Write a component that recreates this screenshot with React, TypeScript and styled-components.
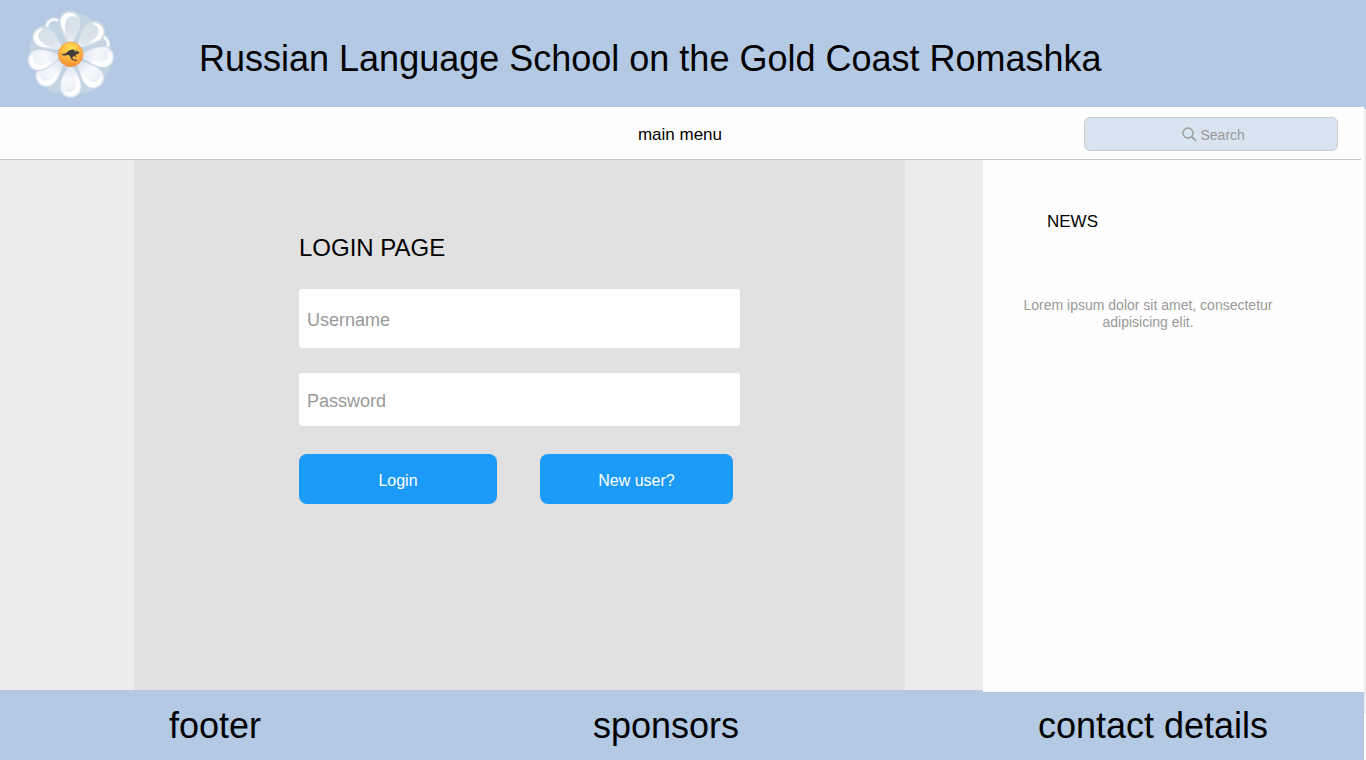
import React from "react";
import styled, { createGlobalStyle } from "styled-components";

const GlobalStyle = createGlobalStyle`
  * { box-sizing: border-box; }
  body {
    margin: 0;
    background: #ffffff;
    color: #000000;
    font-family: "Liberation Sans", Arial, Helvetica, sans-serif;
  }
`;

const blue = "#b3c9e4";
const columns = "134fr 771fr 78fr 381fr";

const Page = styled.div`
  display: flex;
  flex-direction: column;
  min-height: 100vh;
`;

const Header = styled.header`
  display: flex;
  align-items: center;
  height: 107px;
  padding-left: 15px;
  background: ${blue};
`;

const Logo = styled.svg`
  flex: none;
  width: 120px;
  height: 107px;
`;

const Title = styled.h1`
  margin: 10px 0 0 64px;
  font-size: 36px;
  font-weight: 400;
  line-height: 42px;
`;

const Middle = styled.div`
  display: flex;
  flex: 1;
  flex-direction: column;
  padding-right: 2px;
  background: linear-gradient(${blue} 2px, #ececec 2px);
`;

const NavBar = styled.div`
  display: grid;
  grid-template-columns: 1fr auto 1fr;
  align-items: center;
  height: 53px;
  background: linear-gradient(#cccccc, #cccccc) left bottom / calc(100% - 3px) 1px
    no-repeat #fefefe;
`;

const MenuLink = styled.a`
  grid-column: 2;
  padding: 2px 4px 0 0;
  color: #000000;
  font-size: 17px;
  line-height: 20px;
  text-decoration: none;
`;

const SearchBox = styled.label`
  display: flex;
  align-items: center;
  justify-content: center;
  justify-self: end;
  gap: 4px;
  width: 254px;
  height: 34px;
  margin-right: 26px;
  padding: 2px 0 0 6px;
  border: 1px solid #cccccc;
  border-radius: 6px;
  background: #d8e4f0;
`;

const SearchIcon = styled.svg`
  flex: none;
  width: 15px;
  height: 15px;
`;

const SearchInput = styled.input`
  width: 46px;
  padding: 0;
  border: 0;
  outline: 0;
  background: transparent;
  font: 14px/18px "Liberation Sans", Arial, sans-serif;
  &::placeholder { color: #999999; opacity: 1; }
`;

const Content = styled.div`
  display: grid;
  flex: 1;
  grid-template-columns: ${columns};
`;

const Main = styled.main`
  grid-column: 2;
  padding: 72px 165px 24px;
  background: #e1e1e1;
`;

const PageTitle = styled.h2`
  margin: 0 0 26px;
  font-size: 24px;
  font-weight: 400;
  line-height: 31px;
`;

const Form = styled.form`
  display: flex;
  flex-direction: column;
`;

const Field = styled.input<{ $height: number }>`
  width: 100%;
  height: ${(p) => p.$height}px;
  margin-bottom: 25px;
  padding: 4px 8px 0;
  border: 0;
  border-radius: 3px;
  background: #ffffff;
  font: 18px "Liberation Sans", Arial, sans-serif;
  &::placeholder { color: #999999; opacity: 1; }
`;

const Actions = styled.div`
  display: flex;
  gap: 43px;
  padding: 3px 7px 0 0;
`;

const Button = styled.button<{ $grow: number }>`
  flex: ${(p) => p.$grow} 1 0;
  height: 50px;
  padding: 4px 0 0;
  border: 0;
  border-radius: 8px;
  background: #1c9af8;
  color: #ffffff;
  font: 16px "Liberation Sans", Arial, sans-serif;
  cursor: pointer;
`;

const News = styled.aside`
  position: relative;
  grid-column: 4;
  margin-bottom: -2px;
  padding: 51px 38px 24px;
  background: #fefefe;
`;

const NewsTitle = styled.h2`
  margin: 0 0 64px 26px;
  font-size: 17px;
  font-weight: 400;
  line-height: 22px;
`;

const NewsText = styled.p`
  max-width: 254px;
  margin: 0;
  color: #999999;
  font-size: 14px;
  line-height: 17px;
  text-align: center;
`;

const Footer = styled.footer`
  padding-right: 2px;
  background: linear-gradient(#ececec 24px, #ffffff 24px);
`;

const FooterBar = styled.div`
  display: grid;
  grid-template-columns: 430fr 472fr 40fr 422fr;
  align-items: center;
  height: 70px;
  padding-top: 2px;
  background: ${blue};
  font-size: 36px;
  line-height: 42px;
  text-align: center;
`;

const FooterItem = styled.span<{ $column: number }>`
  grid-column: ${(p) => p.$column};
`;

const PETAL =
  "M0-20C-8-42-34-70-32-98C-31-120-16-130 0-130C16-130 31-120 32-98C34-70 8-42 0-20Z";
const SHINE =
  "M-12-58C-27-80-31-96-26-108C-20-124-2-129 14-120C18-118 20-113 19-110C8-117-4-116-11-105C-18-93-16-76-12-58Z";

const backPetals = [
  { angle: -31, shine: true },
  { angle: 19, shine: false },
  { angle: 71, shine: true },
  { angle: 113, shine: false },
  { angle: 155, shine: false },
  { angle: 206, shine: false },
  { angle: 283, shine: false },
];

const frontPetals = [
  { angle: 180, flip: false },
  { angle: 136, flip: true },
  { angle: 228, flip: false },
  { angle: 95, flip: true },
  { angle: 260, flip: false },
  { angle: 302, flip: false },
  { angle: 46, flip: true },
  { angle: -1, flip: false },
];

function Daisy() {
  return (
    <Logo viewBox="0 0 360 321" role="img" aria-label="Romashka daisy">
      <defs>
        <linearGradient id="petal" x1="0" y1="0" x2="0" y2="1">
          <stop offset="0" stopColor="#d3dfe7" />
          <stop offset="0.6" stopColor="#d9e3ea" />
          <stop offset="1" stopColor="#f2f5fa" />
        </linearGradient>
        <linearGradient id="lowPetal" x1="0" y1="0" x2="0" y2="1">
          <stop offset="0" stopColor="#e6edf4" />
          <stop offset="0.5" stopColor="#f6f8fc" />
          <stop offset="1" stopColor="#d5dce9" />
        </linearGradient>
        <radialGradient id="heart" cx="0.5" cy="0.25" r="0.8">
          <stop offset="0" stopColor="#ffe04e" />
          <stop offset="0.5" stopColor="#fdb944" />
          <stop offset="1" stopColor="#f5862f" />
        </radialGradient>
      </defs>
      <g transform="translate(167 163)">
        {backPetals.map(({ angle, shine }) => (
          <g key={angle} transform={`rotate(${angle}) scale(0.97)`}>
            <path d={PETAL} fill="#c4d4e2" />
            {shine && (
              <path
                d="M-22-104Q-16-122 2-121Q14-120 19-112"
                fill="none"
                stroke="#f8fbfd"
                strokeWidth="8"
                strokeLinecap="round"
              />
            )}
          </g>
        ))}
        {frontPetals.map(({ angle, flip }) => (
          <g key={angle} transform={`rotate(${angle}) scale(${flip ? -1 : 1} 1)`}>
            <path
              d={PETAL}
              fill={angle > 90 && angle < 270 ? "url(#lowPetal)" : "url(#petal)"}
              stroke="#c8d6e4"
              strokeWidth="3"
            />
            <path d={SHINE} fill="#ffffff" />
          </g>
        ))}
        <circle r="37" fill="url(#heart)" stroke="#f09552" strokeWidth="2" />
      </g>
      <path
        d="M138 159C141 164 150 163 156 157C162 150 168 148 175 149C180 151 182 155 184 156L185 149L188 154L194 158C190 162 186 162 184 163L181 167L186 172L178 169L175 169C172 172 171 174 174 177L186 180L185 183L171 180L167 173C166 168 162 165 158 164C150 169 141 167 138 159Z"
        fill="#403d3b"
      />
    </Logo>
  );
}

export default function App() {
  return (
    <Page>
      <GlobalStyle />
      <Header>
        <Daisy />
        <Title>Russian Language School on the Gold Coast Romashka</Title>
      </Header>
      <Middle>
        <NavBar>
          <MenuLink href="#menu">main menu</MenuLink>
          <SearchBox>
            <SearchIcon viewBox="0 0 15 15" fill="none" stroke="#999999" aria-hidden="true">
              <circle cx="6" cy="6" r="5" strokeWidth="1.3" />
              <path d="M9.6 9.6L14 14" strokeWidth="1.5" />
            </SearchIcon>
            <SearchInput type="text" placeholder="Search" aria-label="Search" />
          </SearchBox>
        </NavBar>
        <Content>
          <Main>
            <PageTitle>LOGIN PAGE</PageTitle>
            <Form onSubmit={(e) => e.preventDefault()}>
              <Field $height={59} type="text" placeholder="Username" aria-label="Username" />
              <Field $height={53} type="password" placeholder="Password" aria-label="Password" />
              <Actions>
                <Button $grow={198} type="submit">Login</Button>
                <Button $grow={193} type="button">New user?</Button>
              </Actions>
            </Form>
          </Main>
          <News>
            <NewsTitle>NEWS</NewsTitle>
            <NewsText>Lorem ipsum dolor sit amet, consectetur adipisicing elit.</NewsText>
          </News>
        </Content>
      </Middle>
      <Footer>
        <FooterBar>
          <FooterItem $column={1}>footer</FooterItem>
          <FooterItem $column={2}>sponsors</FooterItem>
          <FooterItem $column={4}>contact details</FooterItem>
        </FooterBar>
      </Footer>
    </Page>
  );
}
